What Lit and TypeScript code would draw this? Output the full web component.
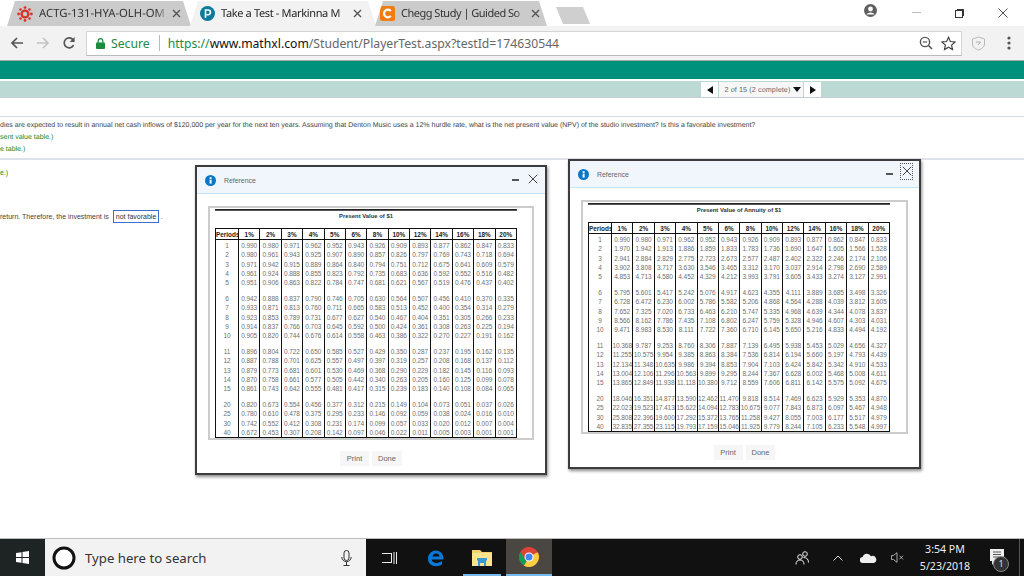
import { LitElement, html, css, svg } from "lit";
import { customElement, property } from "lit/decorators.js";

const RATES = [1, 2, 3, 4, 5, 6, 8, 10, 12, 14, 16, 18, 20];
const PERIODS = [1, 2, 3, 4, 5, 6, 7, 8, 9, 10, 11, 12, 13, 14, 15, 20, 25, 30, 40];
const GAP_AFTER = new Set([5, 10, 15]);

@customElement("ref-dialog")
class RefDialog extends LitElement {
  @property() heading = "";
  @property({ type: Boolean }) annuity = false;
  @property({ type: Boolean }) focused = false;

  static styles = css`
    :host { display: block; width: 100%; height: 100%; box-sizing: border-box; background: #fff; border: 2px solid #3c3c3c; box-shadow: 1px 2px 3px rgba(0,0,0,.45); font-family: "Liberation Sans", Arial, sans-serif; }
    .head { height: 27px; box-sizing: border-box; background: #f1f5fc; border-bottom: 1px solid #c6e4f6; display: flex; align-items: center; padding: 0 5px 0 8px; gap: 8px; }
    .title { font-size: 6.9px; color: #666; flex: 1; }
    .min { width: 7px; height: 2px; background: #555; margin-right: -1px; }
    .close { width: 13px; height: 17px; display: flex; align-items: center; justify-content: center; box-sizing: border-box; margin-bottom: 3px; margin-right: 1px; }
    .close.focus { border: 1px dotted #555; margin-bottom: 6px; }
    .body { padding: 12px 11px 0; }
    .box { border: 2px solid #ccc; height: 234px; box-sizing: border-box; padding: 1px 0 0 5px; }
    .rule { width: 302px; height: 1px; background: #222; border-bottom: 0.5px solid #555; }
    .sheet-title { width: 302px; text-align: center; font-size: 5.9px; font-weight: bold; color: #333; line-height: 10px; margin-bottom: 7px; }
    table { border-collapse: collapse; table-layout: fixed; width: 302px; border: 1.2px solid #111; }
    col.p { width: 23px; }
    th { font-size: 6.4px; color: #222; height: 10px; padding: 0; border-left: 1px solid #111; border-bottom: 1px solid #111; font-weight: bold; line-height: 9px; overflow: hidden; }
    td { font-size: 6.5px; color: #707070; height: 9.3px; line-height: 9.3px; padding: 0; text-align: center; border-left: 1px solid #111; vertical-align: top; letter-spacing: -0.05px; }
    tr.first td { padding-top: 1px; }
    tr.gap td { padding-bottom: 6.5px; }
    .actions { display: flex; justify-content: center; gap: 3px; margin-top: 11px; }
    .btn { height: 15px; padding: 0 6px; min-width: 17px; background: #f6f6f6; font-size: 7.5px; line-height: 15px; color: #666; text-align: center; }
  `;

  private val(n: number, pct: number) {
    const r = pct / 100;
    const v = this.annuity ? (1 - Math.pow(1 + r, -n)) / r : Math.pow(1 + r, -n);
    return v.toFixed(3);
  }

  render() {
    return html`
      <div class="head">
        <svg width="11" height="11" viewBox="0 0 11 11"><circle cx="5.5" cy="5.5" r="5.5" fill="#0a76c8"/><rect x="4.6" y="4.6" width="2" height="4" fill="#fff"/><rect x="4.6" y="2.2" width="2" height="1.7" fill="#fff"/></svg>
        <span class="title">Reference</span>
        <span class="min"></span>
        <span class="close ${this.focused ? "focus" : ""}">
          <svg width="10" height="10" viewBox="0 0 10 10"><path d="M.8.8 9.2 9.2M9.2.8.8 9.2" stroke="#444" stroke-width="1" fill="none"/></svg>
        </span>
      </div>
      <div class="body">
        <div class="box">
          <div class="rule"></div>
          <div class="sheet-title">${this.heading}</div>
          <table>
            <colgroup><col class="p" />${RATES.map(() => html`<col />`)}</colgroup>
            <thead><tr><th>Periods</th>${RATES.map((r) => html`<th>${r}%</th>`)}</tr></thead>
            <tbody>
              ${PERIODS.map((n, i) => html`<tr class="${i === 0 ? "first" : ""} ${GAP_AFTER.has(n) ? "gap" : ""}"><td>${n}</td>${RATES.map((r) => html`<td>${this.val(n, r)}</td>`)}</tr>`)}
            </tbody>
          </table>
        </div>
        <div class="actions"><span class="btn">Print</span><span class="btn">Done</span></div>
      </div>
    `;
  }
}

const closeX = svg`<path d="M1 1 8 8M8 1 1 8" stroke="#555" stroke-width="1.4" fill="none"/>`;

@customElement("app-root")
class AppRoot extends LitElement {
  static styles = css`
    :host { display: block; width: 1024px; height: 576px; position: relative; overflow: hidden; background: #fff; font-family: "Liberation Sans", Arial, sans-serif; }
    .page { display: flex; flex-direction: column; height: 576px; }
    .strip { height: 26px; display: flex; align-items: flex-end; padding-left: 7px; background: #fff; flex: none; position: relative; }
    .tab { height: 25px; display: flex; align-items: center; background: #cbcbcb; clip-path: polygon(0 100%, 8px 0, calc(100% - 8px) 0, 100% 100%); box-sizing: border-box; gap: 6px; margin-right: -1px; font-family: "Noto Sans", sans-serif; font-size: 11px; color: #333; text-rendering: geometricPrecision; }
    .tab svg { flex: none; }
    .tab.t1 { width: 184px; padding: 0 10px 0 10px; font-size: 11.3px; }
    .tab.t2 { width: 186px; padding: 0 14px 0 10px; background: #f2f2f2; color: #222; letter-spacing: -0.35px; }
    .tab.t3 { width: 172px; padding: 0 7px 0 5px; letter-spacing: -0.5px; }
    .tab .label { flex: 1; min-width: 0; white-space: nowrap; -webkit-mask-image: linear-gradient(90deg,#000 92%,rgba(0,0,0,.2)); mask-image: linear-gradient(90deg,#000 92%,rgba(0,0,0,.2)); }
    .newtab { width: 34px; height: 17px; margin: 0 0 2px 10px; background: #cfcfcf; clip-path: polygon(0 0, calc(100% - 7px) 0, 100% 100%, 7px 100%); }
    .winbtns { position: absolute; right: 0; top: 0; height: 26px; display: flex; align-items: center; }
    .winbtns .profile { margin-right: 18px; display: flex; margin-bottom: 5px; }
    .winbtns .wb { width: 43px; display: flex; justify-content: center; }
    .toolbar { height: 34px; background: #f2f2f2; flex: none; display: flex; align-items: center; box-sizing: border-box; padding-bottom: 0; }
    .nav { width: 86px; display: flex; padding-left: 10px; box-sizing: border-box; gap: 12px; }
    .omni { width: 876px; height: 25px; box-sizing: border-box; background: #fff; border: 1px solid #d4d4d4; border-bottom-color: #bbb; display: flex; align-items: center; padding-left: 9px; font-family: "Noto Sans", sans-serif; font-size: 12.2px; white-space: nowrap; }
    .secure { color: #1e8a3e; margin-left: 6px; }
    .sep { width: 1px; height: 16px; background: #bbb; margin: 0 8px 0 9px; }
    .https { color: #1e8a3e; }
    .dom { color: #111; }
    .rest { color: #666; flex: 1; }
    .omni svg.z { margin-right: 8px; }
    .omni svg.s { margin-right: 5px; }
    .tools { flex: 1; display: flex; align-items: center; justify-content: space-between; padding: 0 13px 0 9px; }
    .teal { margin-top: 0; height: 19px; flex: none; background: #00917c; border-top: 1px solid #a8a8a8; box-sizing: border-box; }
    .subbar { margin-top: 2px; height: 17px; flex: none; background: #bcd9d3; border-bottom: 1px solid #c5cdd8; box-sizing: border-box; display: flex; justify-content: flex-end; padding-right: 203px; gap: 1px; }
    .navb { background: #fff; height: 15px; margin-top: 1px; display: flex; align-items: center; justify-content: center; }
    .navb.arrow { width: 17px; }
    .navb.mid { width: 84px; font-size: 7.2px; color: #666; gap: 3px; background: #f7f7f7; letter-spacing: .1px; text-rendering: geometricPrecision; white-space: nowrap; padding-left: 4px; box-sizing: border-box; }
    .spacer { height: 18px; flex: none; border-bottom: 1px solid #d6d9ea; }
    .question { flex: none; height: 43px; box-sizing: border-box; border-bottom: 2px solid #dfe1ec; font-size: 7px; color: #444; white-space: nowrap; padding-top: 3px; line-height: 11px; text-rendering: geometricPrecision; }
    .green { color: #228822; }
    .question div { margin-bottom: 1px; }
    .answer { flex: 1; font-size: 7px; color: #444; white-space: nowrap; padding-top: 7px; line-height: 11px; }
    .answer .line2 { margin-top: 32px; display: flex; align-items: center; }
    .ansbox { border: 1.5px solid #3a6fd0; padding: 0 2px; margin: 0 2px 0 4px; height: 11px; width: 40px; color: #333; display: inline-block; line-height: 11px; }
    .taskbar { height: 38px; flex: none; background: #111; border-top: 1px solid #bbb; box-sizing: border-box; display: flex; align-items: stretch; position: relative; color: #fff; font-family: "Noto Sans", sans-serif; }
    .start { width: 45px; background: #1e2424; display: flex; align-items: center; justify-content: center; }
    .search { width: 321px; background: #f2f2f2; display: flex; align-items: center; padding: 0 14px 0 7px; box-sizing: border-box; gap: 9px; color: #333; font-size: 13.2px; }
    .search span { flex: 1; }
    .app { width: 46px; display: flex; align-items: center; justify-content: center; box-sizing: border-box; position: relative; }
    .app.shift { margin-left: 1px; }
    .app.open::after { content: ""; position: absolute; left: 4px; right: 4px; bottom: 0; height: 2px; background: #76b9ed; }
    .app.active { background: #4a4642; border-bottom: 2px solid #76b9ed; }
    .tray { flex: 1; display: flex; align-items: center; justify-content: flex-end; padding-right: 4px; }
    .tray .ic { display: flex; justify-content: center; width: 30px; }
    .tray .ic.people { margin-right: 6px; }
    .clock { width: 62px; text-align: center; font-size: 10.6px; line-height: 17px; color: #eee; margin-left: 1px; }
    .note { width: 44px; display: flex; justify-content: center; border-right: 1px solid #555; height: 100%; align-items: center; position: relative; box-sizing: border-box; }
    .badge { position: absolute; left: 17px; top: 17px; width: 14px; height: 14px; border-radius: 50%; background: #333; border: 1px solid #888; font-size: 9px; line-height: 14px; text-align: center; color: #ddd; }
    .win { position: absolute; }
    .win.a { left: 195px; top: 165px; width: 352px; height: 310px; }
    .win.b { left: 568px; top: 159px; width: 353px; height: 310px; }
  `;

  render() {
    return html`
      <div class="page">
        <div class="strip">
          <div class="tab t1">
            <svg width="16" height="16" viewBox="0 0 16 16"><g fill="#d8332a"><circle cx="8" cy="8" r="3.4" fill="none" stroke="#d8332a" stroke-width="2.4"/><circle cx="8" cy="1.6" r="1.4"/><circle cx="8" cy="14.4" r="1.4"/><circle cx="1.6" cy="8" r="1.4"/><circle cx="14.4" cy="8" r="1.4"/><circle cx="3.5" cy="3.5" r="1.3"/><circle cx="12.5" cy="3.5" r="1.3"/><circle cx="3.5" cy="12.5" r="1.3"/><circle cx="12.5" cy="12.5" r="1.3"/></g></svg>
            <span class="label">ACTG-131-HYA-OLH-OM</span>
            <svg width="9" height="9" viewBox="0 0 9 9">${closeX}</svg>
          </div>
          <div class="tab t2">
            <svg width="15" height="15" viewBox="0 0 15 15"><circle cx="7.5" cy="7.5" r="7.5" fill="#0a7a9e"/><path d="M5.5 12V4h2.6a2.3 2.3 0 0 1 0 4.7H6.5" stroke="#fff" stroke-width="1.6" fill="none"/></svg>
            <span class="label">Take a Test - Markinna M</span>
            <svg width="9" height="9" viewBox="0 0 9 9">${closeX}</svg>
          </div>
          <div class="tab t3">
            <svg width="15" height="15" viewBox="0 0 15 15"><rect width="15" height="15" rx="2.5" fill="#f07c12"/><path d="M10.8 5.1A3.8 3.8 0 1 0 10.8 9.9" stroke="#fff" stroke-width="2.2" fill="none"/></svg>
            <span class="label">Chegg Study | Guided So</span>
            <svg width="9" height="9" viewBox="0 0 9 9">${closeX}</svg>
          </div>
          <div class="newtab"></div>
          <div class="winbtns">
            <span class="profile"><svg width="13" height="13" viewBox="0 0 13 13"><circle cx="6.5" cy="6.5" r="6.5" fill="#5f5f5f"/><circle cx="6.5" cy="5" r="2.4" fill="#fff"/><path d="M2.4 10.5a4.4 3 0 0 1 8.2 0z" fill="#fff"/></svg></span>
            <span class="wb"><svg width="9" height="2" viewBox="0 0 9 2"><rect width="9" height="1" fill="#bbb"/></svg></span>
            <span class="wb"><svg width="9" height="9" viewBox="0 0 9 9"><rect x=".5" y="1.5" width="7" height="7" fill="none" stroke="#333"/><path d="M2 .5h6.5V7" fill="none" stroke="#333"/></svg></span>
            <span class="wb"><svg width="10" height="10" viewBox="0 0 10 10"><path d="M.5.5 9.5 9.5M9.5.5.5 9.5" stroke="#444" stroke-width=".9"/></svg></span>
          </div>
        </div>

        <div class="toolbar">
          <div class="nav">
            <svg width="14" height="14" viewBox="0 0 14 14"><path d="M13 7H2M7 2 2 7l5 5" stroke="#555" stroke-width="1.7" fill="none"/></svg>
            <svg width="14" height="14" viewBox="0 0 14 14"><path d="M1 7h11M7 2l5 5-5 5" stroke="#c4c4c4" stroke-width="1.7" fill="none"/></svg>
            <svg width="14" height="14" viewBox="0 0 14 14"><path d="M11.6 9.2A5 5 0 1 1 11 3.6" stroke="#555" stroke-width="1.7" fill="none"/><path d="M12.6 1v5h-5z" fill="#555"/></svg>
          </div>
          <div class="omni">
            <svg width="9" height="11" viewBox="0 0 9 11"><rect y="4.5" width="9" height="6.5" rx="1" fill="#1e8a3e"/><path d="M2.2 5V3a2.3 2.3 0 0 1 4.6 0v2" stroke="#1e8a3e" stroke-width="1.2" fill="none"/></svg>
            <span class="secure">Secure</span>
            <span class="sep"></span>
            <span class="https">https://</span><span class="dom">www.mathxl.com</span><span class="rest">/Student/PlayerTest.aspx?testId=174630544</span>
            <svg class="z" width="14" height="14" viewBox="0 0 14 14"><circle cx="6" cy="6" r="4.6" fill="none" stroke="#555" stroke-width="1.4"/><path d="M9.5 9.5 13 13" stroke="#555" stroke-width="1.6"/><path d="M3.8 6h4.4" stroke="#555" stroke-width="1.2"/></svg>
            <svg class="s" width="15" height="15" viewBox="0 0 15 15"><path d="M7.5 1.3 9.4 5.5l4.6.5-3.4 3.1.9 4.5-4-2.3-4 2.3.9-4.5L1 6l4.6-.5z" fill="none" stroke="#444" stroke-width="1.2"/></svg>
          </div>
          <div class="tools">
            <svg width="15" height="15" viewBox="0 0 15 15"><path d="M7.5 1 13.5 3v5c0 3-3 5.2-6 6-3-.8-6-3-6-6V3z" fill="none" stroke="#b9b9b9" stroke-width="1"/><path d="M5 6h4.5L7 9" fill="none" stroke="#b0b0b0"/></svg>
            <svg width="4" height="14" viewBox="0 0 4 14"><g fill="#555"><circle cx="2" cy="2" r="1.6"/><circle cx="2" cy="7" r="1.6"/><circle cx="2" cy="12" r="1.6"/></g></svg>
          </div>
        </div>

        <div class="teal"></div>
        <div class="subbar">
          <div class="navb arrow"><svg width="6" height="8" viewBox="0 0 6 8"><path d="M6 0v8L0 4z" fill="#111"/></svg></div>
          <div class="navb mid">2 of 15 (2 complete) <svg width="8" height="5" viewBox="0 0 8 5"><path d="M0 0h8L4 5z" fill="#111"/></svg></div>
          <div class="navb arrow"><svg width="6" height="8" viewBox="0 0 6 8"><path d="M0 0v8l6-4z" fill="#111"/></svg></div>
        </div>
        <div class="spacer"></div>
        <div class="question">
          <div>dies are expected to result in annual net cash inflows of $120,000 per year for the next ten years. Assuming that Denton Music uses a 12% hurdle rate, what is the net present value (NPV) of the studio investment? Is this a favorable investment?</div>
          <div class="green">sent value table.)</div>
          <div class="green">e table.)</div>
        </div>
        <div class="answer">
          <div class="green">e.)</div>
          <div class="line2">return. Therefore, the investment is <span class="ansbox">not favorable</span>.</div>
        </div>

        <div class="taskbar">
          <div class="start"><svg width="13" height="13" viewBox="0 0 13 13"><path d="M0 2 5.5 1.2V6H0zM6.5 1 13 0v6H6.5zM0 7h5.5v4.8L0 11zM6.5 7H13v6l-6.5-1z" fill="#fff"/></svg></div>
          <div class="search">
            <svg width="24" height="24" viewBox="0 0 24 24"><circle cx="12" cy="12" r="10" fill="#fff" stroke="#111" stroke-width="3"/></svg>
            <span>Type here to search</span>
            <svg width="11" height="16" viewBox="0 0 11 16"><rect x="3" y=".5" width="5" height="10" rx="2.5" fill="none" stroke="#333"/><path d="M.8 7a4.7 4.7 0 0 0 9.4 0M5.5 12v3M2.5 15.5h6" fill="none" stroke="#333"/></svg>
          </div>
          <div class="app"><svg width="15" height="14" viewBox="0 0 15 14"><path d="M.5 2.5h9v9h-9M0 2.5h10M0 11.5h10M12 1v12M14.5 1v12" fill="none" stroke="#eee" stroke-width="1"/></svg></div>
          <div class="app shift"><svg width="20" height="20" viewBox="0 0 20 20"><path d="M3 11.4h14.5C17.6 6 14.500 2.500 10 2.500 5.300 2.500 2 6.200 2 10.700c0 4.700 3.600 7.500 8 7.500 2.300 0 4.400-.6 6-1.700v-3.400c-1.600 1.200-3.500 1.800-5.300 1.800-2.800 0-4.800-1.200-5.100-3.500M6.500 8.400c.4-1.700 1.800-2.800 3.600-2.800 1.900 0 3.200 1.100 3.400 2.800z" fill="#0a78d7" fill-rule="evenodd"/></svg></div>
          <div class="app open"><svg width="20" height="17" viewBox="0 0 20 17"><path d="M0 2V1h8l2 2h10v14H0z" fill="#f4cf6b"/><rect y="4" width="20" height="13" fill="#fbe38f"/><path d="M6 11h8v6h-2v-3H8v3H6z" fill="#3a9ad9"/><rect x="5" y="9" width="10" height="2.500" fill="#3a9ad9"/></svg></div>
          <div class="app active shift"><svg width="20" height="20" viewBox="0 0 20 20"><circle cx="10" cy="10" r="10" fill="#db4437"/><path d="M10 10 1.340 5A10 10 0 0 0 5 18.660z" fill="#0f9d58"/><path d="M10 10 5 18.660A10 10 0 0 0 18.660 5z" fill="#ffcd40"/><path d="M10 5.500h8.660A10 10 0 0 0 1.340 5L6 12.200z" fill="#db4437"/><circle cx="10" cy="10" r="4.500" fill="#fff"/><circle cx="10" cy="10" r="3.500" fill="#4285f4"/></svg></div>
          <div class="tray">
            <span class="ic people"><svg width="15" height="14" viewBox="0 0 15 14"><circle cx="10" cy="3" r="2.300" fill="none" stroke="#eee"/><circle cx="5" cy="6" r="2.300" fill="none" stroke="#eee"/><path d="M1 13.500c0-3 1.500-4.500 4-4.500s4 1.500 4 4.500M8.500 6.500c3 0 5 1.500 5 5" fill="none" stroke="#eee"/></svg></span>
            <span class="ic"><svg width="10" height="6" viewBox="0 0 10 6"><path d="M.5 5.500 5 1l4.500 4.500" fill="none" stroke="#ddd"/></svg></span>
            <span class="ic"><svg width="17" height="10" viewBox="0 0 17 10"><path d="M3 10a3 3 0 0 1-.4-6A4.500 4.500 0 0 1 11 3.200 3.500 3.500 0 0 1 14 10z" fill="#eee"/></svg></span>
            <span class="ic"><svg width="14" height="11" viewBox="0 0 14 11"><path d="M.5 3.500h2L6 .7v9.600L2.500 7.500h-2zM8.500 3.700l3.600 3.600M12.100 3.700 8.500 7.300" fill="none" stroke="#ccc" stroke-width=".8"/></svg></span>
            <div class="clock"><div>3:54 PM</div><div>5/23/2018</div></div>
            <div class="note">
              <svg width="16" height="17" viewBox="0 0 16 17"><path d="M0 0h14v12H5l-3 4v-4H0z" fill="#eee"/><path d="M3 3h8M3 5.500h8M3 8h6" stroke="#555"/></svg>
              <span class="badge">1</span>
            </div>
          </div>
        </div>
      </div>
      <div class="win a"><ref-dialog heading="Present Value of $1"></ref-dialog></div>
      <div class="win b"><ref-dialog heading="Present Value of Annuity of $1" annuity focused></ref-dialog></div>
    `;
  }
}
